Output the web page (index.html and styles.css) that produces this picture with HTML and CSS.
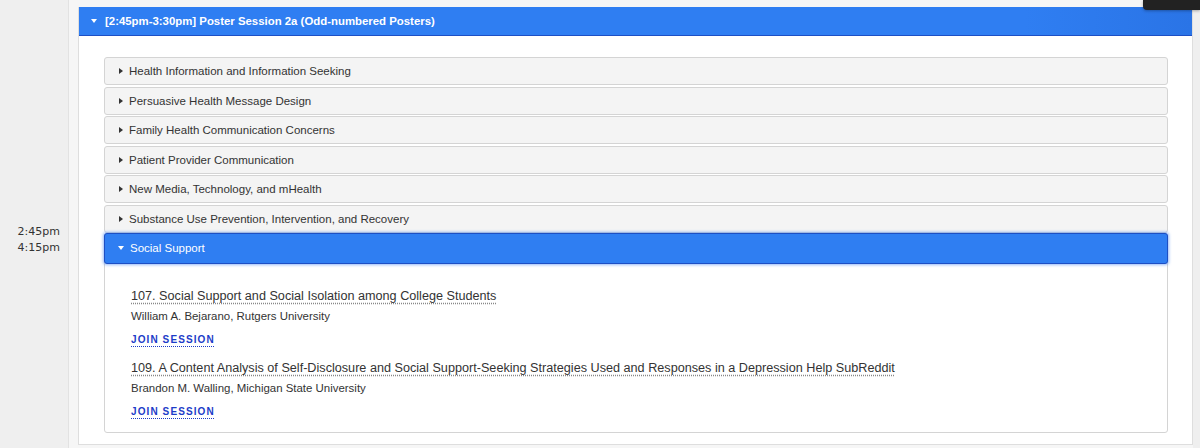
FILE: index.html
```html
<!DOCTYPE html>
<html>
<head>
<meta charset="utf-8">
<link rel="stylesheet" href="styles.css">
</head>
<body>
<div class="page">
  <div class="time-col">
    <div class="time">2:45pm</div>
    <div class="time">4:15pm</div>
  </div>
  <div class="main">
    <div class="session">
      <div class="session-head"><span class="caret-down"></span>[2:45pm-3:30pm] Poster Session 2a (Odd-numbered Posters)</div>
      <div class="session-body">
        <div class="acc-item"><div class="acc-head"><span class="caret-right"></span>Health Information and Information Seeking</div></div>
        <div class="acc-item"><div class="acc-head"><span class="caret-right"></span>Persuasive Health Message Design</div></div>
        <div class="acc-item"><div class="acc-head"><span class="caret-right"></span>Family Health Communication Concerns</div></div>
        <div class="acc-item"><div class="acc-head"><span class="caret-right"></span>Patient Provider Communication</div></div>
        <div class="acc-item"><div class="acc-head"><span class="caret-right"></span>New Media, Technology, and mHealth</div></div>
        <div class="acc-item"><div class="acc-head"><span class="caret-right"></span>Substance Use Prevention, Intervention, and Recovery</div></div>
        <div class="acc-item open">
          <div class="acc-head active"><span class="caret-down small"></span>Social Support</div>
          <div class="acc-body">
            <div class="paper">
              <a class="paper-title">107. Social Support and Social Isolation among College Students</a>
              <div class="author">William A. Bejarano, Rutgers University</div>
              <a class="join">JOIN SESSION</a>
            </div>
            <div class="paper">
              <a class="paper-title">109. A Content Analysis of Self-Disclosure and Social Support-Seeking Strategies Used and Responses in a Depression Help SubReddit</a>
              <div class="author">Brandon M. Walling, Michigan State University</div>
              <a class="join">JOIN SESSION</a>
            </div>
          </div>
        </div>
      </div>
    </div>
  </div>
  <div class="tooltip"></div>
</div>
</body>
</html>
```
FILE: styles.css
```css
html, body {
  margin: 0;
  padding: 0;
  height: 100%;
  overflow: hidden;
}
body {
  background: #efefef;
  font-family: "Liberation Sans", Arial, sans-serif;
  color: #333;
}
.page {
  position: relative;
  display: flex;
  height: 448px;
}
.time-col {
  width: 69px;
  border-right: 1px solid #e2e2e2;
  background: #efefef;
  display: flex;
  flex-direction: column;
  align-items: flex-end;
  padding-top: 224px;
  padding-right: 8px;
  box-sizing: border-box;
  flex: none;
}
.time {
  font-family: "DejaVu Sans", sans-serif;
  font-size: 11px;
  line-height: 16px;
  color: #333;
}
.main {
  flex: none;
  width: 1124px;
  background: #f6f6f6;
  padding: 7px 0 0 9px;
  box-sizing: border-box;
}
.session {
  width: 1115px;
  background: #fff;
  border: 1px solid #dedede;
  border-top: none;
  box-sizing: border-box;
}
.session-head {
  height: 29px;
  background: linear-gradient(90deg, #2f7ef2 0%, #2f7ef2 85%, #2a74e6 100%);
  border-bottom: 1px solid #1d4fc4;
  box-sizing: border-box;
  color: #fff;
  font-weight: bold;
  font-size: 11.4px;
  display: flex;
  align-items: center;
  padding-left: 12px;
}
.caret-down {
  display: inline-block;
  width: 0;
  height: 0;
  border-left: 3.5px solid transparent;
  border-right: 3.5px solid transparent;
  border-top: 4px solid #fff;
  margin-right: 8px;
}
.caret-down.small {
  margin-right: 6px;
}
.caret-right {
  display: inline-block;
  width: 0;
  height: 0;
  border-top: 3.5px solid transparent;
  border-bottom: 3.5px solid transparent;
  border-left: 4px solid #333;
  margin-right: 6px;
}
.session-body {
  padding: 21px 24px 11px 25px;
}
.acc-item {
  border: 1px solid #d4d4d4;
  border-radius: 3px;
  background: #f4f4f4;
  margin-bottom: 1.6px;
}
.acc-head {
  height: 26px;
  display: flex;
  align-items: center;
  padding-left: 14px;
  font-size: 11.5px;
  color: #333;
}
.acc-item.open {
  background: #fff;
  margin-top: -1.6px;
  margin-bottom: 0;
}
.acc-head.active {
  background: #2f7ef2;
  color: #fff;
  height: 31px;
  margin: -1px -1px 0 -1px;
  border: 1px solid #1d4fc4;
  border-radius: 3px;
  box-shadow: 0 0 3px 1px rgba(80, 140, 245, 0.6);
  box-sizing: border-box;
  padding-left: 13px;
}
.acc-body {
  padding: 22px 20px 13px 26px;
}
.paper + .paper {
  margin-top: 11px;
}
.paper-title {
  display: inline-block;
  font-size: 12.65px;
  line-height: 18px;
  color: #333;
  text-decoration: underline dotted #888;
  text-underline-offset: 3px;
}
.author {
  font-size: 11.45px;
  line-height: 16px;
  margin-top: 3px;
  color: #333;
}
.join {
  display: inline-block;
  margin-top: 9px;
  font-size: 10px;
  line-height: 14px;
  font-weight: bold;
  letter-spacing: 1.1px;
  color: #1c3cc8;
  text-decoration: underline dotted #1c3cc8;
  text-underline-offset: 3px;
}
.tooltip {
  position: absolute;
  top: 0;
  right: 0;
  width: 57px;
  height: 10px;
  background: #222;
  border-bottom-left-radius: 4px;
  box-shadow: 0 1px 3px rgba(0,0,0,0.3);
}
```
